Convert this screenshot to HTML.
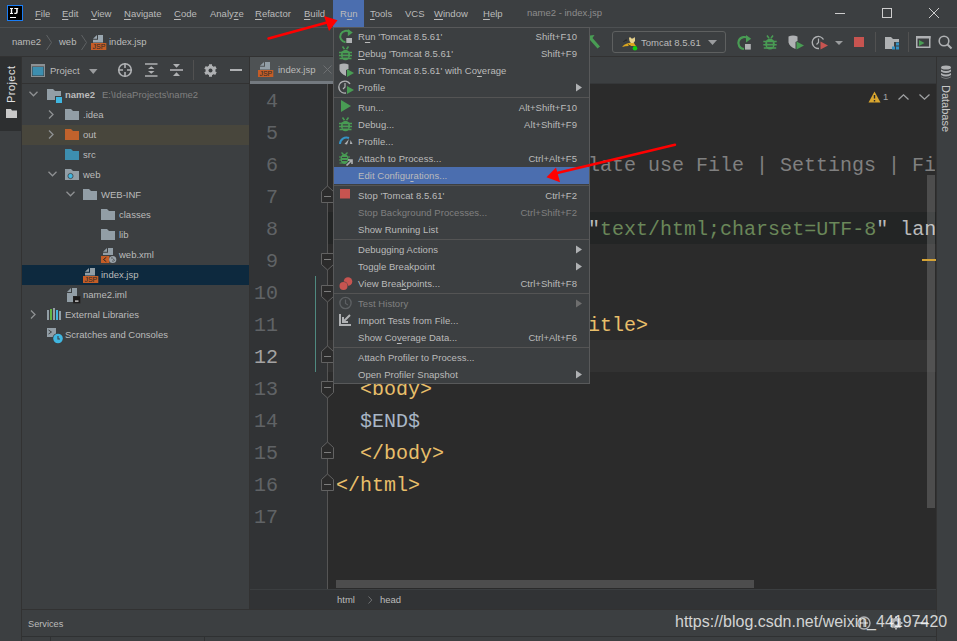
<!DOCTYPE html>
<html><head><meta charset="utf-8">
<style>
*{margin:0;padding:0;box-sizing:border-box}
html,body{width:957px;height:641px;overflow:hidden;background:#3c3f41}
body{position:relative;font-family:"Liberation Sans",sans-serif;font-size:9.5px;color:#bbbbbb}
.a{position:absolute}
.t{position:absolute;white-space:pre;line-height:12px}
.m{letter-spacing:0.05px}
u{text-underline-offset:2px;text-decoration-thickness:1px}
.mono{font-family:"Liberation Mono",monospace}
svg{position:absolute;overflow:visible}
</style></head><body>

<!-- menubar -->
<div class="a" style="left:0;top:0;width:957px;height:27px;background:#3c3f41"></div>
<div class="a" style="left:0;top:27px;width:957px;height:1px;background:#4d5052"></div>
<!-- IJ logo -->
<svg class="a" style="left:7px;top:5px" width="16" height="16"><rect x="0.5" y="0.5" width="15" height="15" fill="#000" stroke="#1a7df5" stroke-width="1"/><path d="M3 3 H6 V4 H5.2 V8 H6 V9 H3 V8 H3.8 V4 H3 Z" fill="#fff"/><path d="M7.3 3 H11.2 V4 H10.7 V7.3 Q10.7 9 8.9 9 H7.3 V7.7 H8.6 Q9.2 7.7 9.2 7.1 V4 H7.3 Z" fill="#fff"/><rect x="3" y="12" width="6" height="1" fill="#fff"/></svg>
<div id="menubar">
<div class="t" style="left:35px;top:8px"><u>F</u>ile</div>
<div class="t" style="left:62px;top:8px"><u>E</u>dit</div>
<div class="t" style="left:91px;top:8px"><u>V</u>iew</div>
<div class="t" style="left:124px;top:8px"><u>N</u>avigate</div>
<div class="t" style="left:174px;top:8px"><u>C</u>ode</div>
<div class="t" style="left:210px;top:8px">Analy<u>z</u>e</div>
<div class="t" style="left:255px;top:8px"><u>R</u>efactor</div>
<div class="t" style="left:304px;top:8px"><u>B</u>uild</div>
<div class="a" style="left:333px;top:0;width:31px;height:27px;background:#4b6eaf"></div>
<div class="t" style="left:340px;top:8px">R<u>u</u>n</div>
<div class="t" style="left:370px;top:8px"><u>T</u>ools</div>
<div class="t" style="left:405px;top:8px">VCS</div>
<div class="t" style="left:434px;top:8px"><u>W</u>indow</div>
<div class="t" style="left:483px;top:8px"><u>H</u>elp</div>
<div class="t" style="left:527px;top:7px;color:#8c8c8c">name2 - index.jsp</div>
</div>

<!-- navbar -->
<div class="a" style="left:0;top:56px;width:957px;height:1px;background:#323232"></div>
<div class="t" style="left:12px;top:36px">name2</div>
<div class="t" style="left:59px;top:36px">web</div>
<div class="t" style="left:109px;top:36px">index.jsp</div>

<div class="a" style="left:835px;top:13px;width:10px;height:1px;background:#cdcdcd"></div>
<div class="a" style="left:882px;top:8px;width:10px;height:10px;border:1px solid #cdcdcd"></div>
<svg class="a" style="left:929px;top:8px" width="10" height="10"><path d="M0 0 L10 10 M10 0 L0 10" stroke="#cdcdcd" stroke-width="1"/></svg>
<svg class="a" style="left:46px;top:35px" width="7" height="15"><path d="M0.5 0 L5.5 7.5 L0.5 15" fill="none" stroke="#5e6163" stroke-width="1"/></svg>
<svg class="a" style="left:81px;top:35px" width="7" height="15"><path d="M0.5 0 L5.5 7.5 L0.5 15" fill="none" stroke="#5e6163" stroke-width="1"/></svg>
<svg class="a" style="left:91px;top:35px" width="16" height="16"><path d="M2 3.7 L6 0 V3.7 Z M7 0 H12 V7.5 H2 V4.7 H7 Z" fill="#9aa7b0"/><rect x="0" y="8" width="15.3" height="7" fill="#c55d26"/><text x="8" y="14.3" font-family="Liberation Sans" font-size="7" fill="#2b2b2b" text-anchor="middle" letter-spacing="0">JSP</text></svg>
<svg class="a" style="left:589px;top:34px" width="14" height="16"><path d="M1 1.5 L5.5 1 L3.5 4 L11 12.5 L8.5 14.5 L1 6 Z" fill="#499c54"/></svg>
<div class="a" style="left:612px;top:31px;width:114px;height:22px;border:1px solid #5e6060;border-radius:3px"></div>
<svg class="a" style="left:621px;top:36px" width="17" height="15"><path d="M1 11 Q3 8 6 7.5 L10 6.5 L13 7 Q14 9 15 10 Q11 10 8 10 Q4 10 1 11 Z" fill="#d8a520"/><path d="M2.5 6 Q4 3.5 6 4" fill="none" stroke="#1e1e1e" stroke-width="1"/><path d="M8 2 L9 1 L10.5 2.5 H12 L13.5 1 L14 2.5 V5 L12.5 7 H10 L8.5 5 Z" fill="#e6d28c"/><path d="M7 8.5 Q8 10 9.5 9.5" stroke="#1e1e1e" stroke-width="0.8" fill="none"/><circle cx="14" cy="12.3" r="2.3" fill="#10d010"/></svg>
<div class="t" style="left:641px;top:37px">Tomcat 8.5.61</div>
<svg class="a" style="left:708px;top:40px" width="9" height="5"><path d="M0 0 H9 L4.5 5 Z" fill="#9a9c9e"/></svg>
<svg class="a" style="left:737px;top:35px" width="15" height="15"><path d="M11.6 3.8 A6 6 0 1 0 7 14" fill="none" stroke="#499c54" stroke-width="2.2"/><path d="M9 0 L14.2 3.8 L9 7.6 Z" fill="#499c54"/><rect x="8" y="9" width="5.8" height="5.6" fill="#afb1b3"/></svg>
<svg class="a" style="left:763px;top:35px" width="15" height="15"><path d="M4 0.5 L6 3.2 M10 0.5 L8 3.2" stroke="#499c54" stroke-width="1.5"/><ellipse cx="7" cy="9" rx="4.8" ry="5.5" fill="#499c54"/><path d="M0.3 6.5 H13.7 M0.3 9.7 H13.7 M0.8 12.9 H13.2" stroke="#499c54" stroke-width="1.5"/><path d="M4.2 8 H9.8 M4.2 11.2 H9.8" stroke="#3c3f41" stroke-width="1.3"/></svg>
<svg class="a" style="left:788px;top:35px" width="16" height="15"><path d="M0.5 1.5 Q5 -0.5 9.5 1.5 V6 L7.5 7 V14 Q1.5 11.5 0.5 7.5 Z" fill="#afb1b3"/><path d="M8.5 6.5 L16 10.5 L8.5 14.5 Z" fill="#499c54"/></svg>
<svg class="a" style="left:812px;top:35px" width="16" height="15"><path d="M11.5 4.5 A6 6 0 1 0 7 13.5" fill="none" stroke="#afb1b3" stroke-width="1.4"/><path d="M6.5 3.5 V7.5 L4.5 9.5" fill="none" stroke="#afb1b3" stroke-width="1.2"/><path d="M8.5 6.5 L16 10.5 L8.5 14.5 Z" fill="#c75450"/></svg>
<svg class="a" style="left:835px;top:41px" width="8" height="4"><path d="M0 0 H8 L4 4 Z" fill="#9a9c9e"/></svg>
<div class="a" style="left:854px;top:37px;width:10px;height:10px;background:#c75450"></div>
<div class="a" style="left:875px;top:32px;width:1px;height:20px;background:#515151"></div>
<div class="a" style="left:908px;top:32px;width:1px;height:20px;background:#515151"></div>
<svg class="a" style="left:885px;top:37px" width="15" height="13"><path d="M0 0 H6 L8 2 H14 V5 H9 V12 H0 Z" fill="#afb1b3"/><rect x="11" y="5.5" width="3" height="3" fill="#3592c4"/><rect x="7" y="9.5" width="3" height="3" fill="#3592c4"/><rect x="11" y="9.5" width="3" height="3" fill="#3592c4"/></svg>
<svg class="a" style="left:916px;top:36px" width="15" height="12"><rect x="0.75" y="0.75" width="13" height="10.5" fill="none" stroke="#afb1b3" stroke-width="1.5"/><rect x="0" y="0" width="14.5" height="2.5" fill="#afb1b3"/><path d="M3 4 L8.5 7 L3 10 Z" fill="#499c54"/></svg>
<svg class="a" style="left:938px;top:35px" width="15" height="15"><circle cx="6" cy="6" r="4.8" fill="none" stroke="#afb1b3" stroke-width="1.6"/><path d="M9.5 9.5 L13.5 13.5" stroke="#afb1b3" stroke-width="2"/></svg>
<!-- left stripe -->
<div class="a" style="left:0;top:57px;width:21px;height:584px;background:#3c3f41"></div>
<div class="a" style="left:0;top:57px;width:21px;height:74px;background:#2d2f30"></div>
<div class="a" style="left:21px;top:57px;width:1px;height:584px;background:#323232"></div>

<!-- project panel -->
<div class="a" style="left:22px;top:83px;width:227px;height:1px;background:#323232"></div>
<div class="t" style="left:50px;top:65px">Project</div>

<!-- tree -->
<div class="a" style="left:22px;top:125px;width:227px;height:20px;background:#48463c"></div>
<div class="a" style="left:22px;top:265px;width:227px;height:20px;background:#0d293e"></div>
<div class="t" style="left:65px;top:89px;font-weight:bold">name2</div>
<div class="t" style="left:102px;top:89px;color:#808080">E:\IdeaProjects\name2</div>
<div class="t" style="left:83px;top:109px">.idea</div>
<div class="t" style="left:83px;top:129px">out</div>
<div class="t" style="left:83px;top:149px">src</div>
<div class="t" style="left:83px;top:169px">web</div>
<div class="t" style="left:101px;top:189px">WEB-INF</div>
<div class="t" style="left:119px;top:209px">classes</div>
<div class="t" style="left:119px;top:229px">lib</div>
<div class="t" style="left:119px;top:249px">web.xml</div>
<div class="t" style="left:101px;top:269px">index.jsp</div>
<div class="t" style="left:83px;top:289px">name2.iml</div>
<div class="t" style="left:65px;top:309px">External Libraries</div>
<div class="t" style="left:65px;top:329px">Scratches and Consoles</div>

<!-- separator project/editor -->
<div class="a" style="left:249px;top:57px;width:1px;height:553px;background:#323232"></div>

<!-- editor -->
<div class="a" style="left:250px;top:57px;width:686px;height:27px;background:#3c3f41"></div>
<div class="a" style="left:250px;top:57px;width:83px;height:24px;background:#4e5254"></div>
<div class="a" style="left:250px;top:81px;width:83px;height:3px;background:#747a80"></div>
<div class="a" style="left:333px;top:83px;width:603px;height:1px;background:#353739"></div>
<div class="t" style="left:278px;top:64px">index.jsp</div>
<div class="a" style="left:250px;top:84px;width:78px;height:505px;background:#313335"></div>
<div class="a" style="left:328px;top:84px;width:608px;height:505px;background:#2b2b2b"></div>
<div class="a" style="left:328px;top:340px;width:608px;height:32px;background:#323232"></div>
<div class="a" style="left:328px;top:212px;width:608px;height:32px;background:#232525"></div>

<div class="t mono" style="left:250px;width:28px;text-align:right;top:86px;line-height:32px;font-size:20px;color:#606366">4</div>
<div class="t mono" style="left:250px;width:28px;text-align:right;top:118px;line-height:32px;font-size:20px;color:#606366">5</div>
<div class="t mono" style="left:250px;width:28px;text-align:right;top:150px;line-height:32px;font-size:20px;color:#606366">6</div>
<div class="t mono" style="left:250px;width:28px;text-align:right;top:182px;line-height:32px;font-size:20px;color:#606366">7</div>
<div class="t mono" style="left:250px;width:28px;text-align:right;top:214px;line-height:32px;font-size:20px;color:#606366">8</div>
<div class="t mono" style="left:250px;width:28px;text-align:right;top:246px;line-height:32px;font-size:20px;color:#606366">9</div>
<div class="t mono" style="left:250px;width:28px;text-align:right;top:278px;line-height:32px;font-size:20px;color:#606366">10</div>
<div class="t mono" style="left:250px;width:28px;text-align:right;top:310px;line-height:32px;font-size:20px;color:#606366">11</div>
<div class="t mono" style="left:250px;width:28px;text-align:right;top:342px;line-height:32px;font-size:20px;color:#a4a3a3">12</div>
<div class="t mono" style="left:250px;width:28px;text-align:right;top:374px;line-height:32px;font-size:20px;color:#606366">13</div>
<div class="t mono" style="left:250px;width:28px;text-align:right;top:406px;line-height:32px;font-size:20px;color:#606366">14</div>
<div class="t mono" style="left:250px;width:28px;text-align:right;top:438px;line-height:32px;font-size:20px;color:#606366">15</div>
<div class="t mono" style="left:250px;width:28px;text-align:right;top:470px;line-height:32px;font-size:20px;color:#606366">16</div>
<div class="t mono" style="left:250px;width:28px;text-align:right;top:502px;line-height:32px;font-size:20px;color:#606366">17</div>
<div class="a" style="left:328px;top:84px;width:607px;height:505px;overflow:hidden"><div class="t mono" style="left:8px;top:2px;line-height:32px;font-size:20px"><span style="color:#808080">  Date: 2021/1/22</span></div><div class="t mono" style="left:8px;top:34px;line-height:32px;font-size:20px"><span style="color:#808080">  Time: 14:46</span></div><div class="t mono" style="left:8px;top:66px;line-height:32px;font-size:20px"><span style="color:#808080">  To change this template use File | Settings | File Templates.</span></div><div class="t mono" style="left:8px;top:98px;line-height:32px;font-size:20px"><span style="color:#808080">--%&gt;</span></div><div class="t mono" style="left:8px;top:130px;line-height:32px;font-size:20px"><span style="color:#e8bf6a">&lt;%@</span><span style="color:#a9b7c6"> </span><span style="color:#e8bf6a">page </span><span style="color:#bababa">contentType=</span><span style="color:#bababa">"</span><span style="color:#6a8759">text/html;charset=UTF-8</span><span style="color:#bababa">"</span><span style="color:#bababa"> language=</span><span style="color:#bababa">"</span><span style="color:#6a8759">java</span><span style="color:#bababa">"</span><span style="color:#e8bf6a"> %&gt;</span></div><div class="t mono" style="left:8px;top:162px;line-height:32px;font-size:20px"><span style="color:#e8bf6a">&lt;html&gt;</span></div><div class="t mono" style="left:8px;top:194px;line-height:32px;font-size:20px"><span style="color:#e8bf6a">  &lt;head&gt;</span></div><div class="t mono" style="left:8px;top:226px;line-height:32px;font-size:20px"><span style="color:#e8bf6a">    &lt;title&gt;</span><span style="color:#a9b7c6">$Title$</span><span style="color:#e8bf6a">&lt;/title&gt;</span></div><div class="t mono" style="left:8px;top:258px;line-height:32px;font-size:20px"><span style="color:#e8bf6a">  &lt;/head&gt;</span></div><div class="t mono" style="left:8px;top:290px;line-height:32px;font-size:20px"><span style="color:#e8bf6a">  &lt;body&gt;</span></div><div class="t mono" style="left:8px;top:322px;line-height:32px;font-size:20px"><span style="color:#a9b7c6">  $END$</span></div><div class="t mono" style="left:8px;top:354px;line-height:32px;font-size:20px"><span style="color:#e8bf6a">  &lt;/body&gt;</span></div><div class="t mono" style="left:8px;top:386px;line-height:32px;font-size:20px"><span style="color:#e8bf6a">&lt;/html&gt;</span></div></div>
<div class="a" style="left:927px;top:175px;width:8px;height:333px;background:rgba(255,255,255,0.16)"></div>
<div class="a" style="left:327px;top:84px;width:1px;height:505px;background:#555555"></div>
<svg class="a" style="left:321px;top:185px" width="13" height="19"><path d="M0.5 17.5 H12.5 V6.5 L6.5 1 L0.5 6.5 Z" fill="#2b2b2b" stroke="#626262" stroke-width="1"/><path d="M3 11.5 H10" stroke="#7c7c7c" stroke-width="1"/></svg>
<svg class="a" style="left:321px;top:253px" width="13" height="19"><path d="M0.5 0.5 H12.5 V11.5 L6.5 17 L0.5 11.5 Z" fill="#2b2b2b" stroke="#626262" stroke-width="1"/><path d="M3 6.5 H10" stroke="#7c7c7c" stroke-width="1"/></svg>
<svg class="a" style="left:321px;top:285px" width="13" height="19"><path d="M0.5 0.5 H12.5 V11.5 L6.5 17 L0.5 11.5 Z" fill="#2b2b2b" stroke="#626262" stroke-width="1"/><path d="M3 6.5 H10" stroke="#7c7c7c" stroke-width="1"/></svg>
<svg class="a" style="left:321px;top:345px" width="13" height="19"><path d="M0.5 17.5 H12.5 V6.5 L6.5 1 L0.5 6.5 Z" fill="#2b2b2b" stroke="#626262" stroke-width="1"/><path d="M3 11.5 H10" stroke="#7c7c7c" stroke-width="1"/></svg>
<svg class="a" style="left:321px;top:381px" width="13" height="19"><path d="M0.5 0.5 H12.5 V11.5 L6.5 17 L0.5 11.5 Z" fill="#2b2b2b" stroke="#626262" stroke-width="1"/><path d="M3 6.5 H10" stroke="#7c7c7c" stroke-width="1"/></svg>
<svg class="a" style="left:321px;top:441px" width="13" height="19"><path d="M0.5 17.5 H12.5 V6.5 L6.5 1 L0.5 6.5 Z" fill="#2b2b2b" stroke="#626262" stroke-width="1"/><path d="M3 11.5 H10" stroke="#7c7c7c" stroke-width="1"/></svg>
<svg class="a" style="left:321px;top:473px" width="13" height="19"><path d="M0.5 17.5 H12.5 V6.5 L6.5 1 L0.5 6.5 Z" fill="#2b2b2b" stroke="#626262" stroke-width="1"/><path d="M3 11.5 H10" stroke="#7c7c7c" stroke-width="1"/></svg>
<div class="a" style="left:315px;top:276px;width:1px;height:96px;background:#4f8a80"></div>
<!-- breadcrumbs bottom -->
<div class="a" style="left:250px;top:589px;width:686px;height:20px;background:#313335"></div>
<div class="a" style="left:250px;top:589px;width:686px;height:1px;background:#3b3e40"></div>
<div class="t" style="left:337px;top:594px">html</div>
<div class="t" style="left:380px;top:594px">head</div>

<!-- services -->
<div class="a" style="left:22px;top:609px;width:914px;height:1px;background:#323232"></div>
<div class="t" style="left:28px;top:618px;font-size:9.2px">Services</div>
<div class="a" style="left:22px;top:636px;width:914px;height:1px;background:#2f3132"></div>
<div class="a" style="left:50px;top:637px;width:1px;height:4px;background:#2f3132"></div>
<div class="a" style="left:204px;top:637px;width:1px;height:4px;background:#2f3132"></div>

<!-- right stripe -->
<div class="a" style="left:936px;top:57px;width:1px;height:584px;background:#323232"></div>

<svg class="a" style="left:29px;top:91px" width="10" height="6"><path d="M0.5 0.8 L4.5 4.8 L8.5 0.8" fill="none" stroke="#8f9193" stroke-width="1.3"/></svg>
<svg class="a" style="left:47px;top:89px" width="16" height="15"><path d="M0 0 H6 L8 2 H14 V11 H0 Z" fill="#929ea6"/><rect x="8" y="7" width="7" height="7" fill="#3c3f41"/><rect x="9" y="8" width="6" height="6" fill="#40b6e0"/></svg>
<svg class="a" style="left:48px;top:110px" width="7" height="9"><path d="M1 0.5 L5 4.5 L1 8.5" fill="none" stroke="#8f9193" stroke-width="1.3"/></svg>
<svg class="a" style="left:65px;top:109px" width="16" height="14"><path d="M0 0 H6 L8 2 H14 V11 H0 Z" fill="#929ea6"/></svg>
<svg class="a" style="left:48px;top:130px" width="7" height="9"><path d="M1 0.5 L5 4.5 L1 8.5" fill="none" stroke="#8f9193" stroke-width="1.3"/></svg>
<svg class="a" style="left:65px;top:129px" width="16" height="14"><path d="M0 0 H6 L8 2 H14 V11 H0 Z" fill="#c1622c"/></svg>
<svg class="a" style="left:65px;top:149px" width="16" height="14"><path d="M0 0 H6 L8 2 H14 V11 H0 Z" fill="#3d8eaf"/></svg>
<svg class="a" style="left:48px;top:171px" width="10" height="6"><path d="M0.5 0.8 L4.5 4.8 L8.5 0.8" fill="none" stroke="#8f9193" stroke-width="1.3"/></svg>
<svg class="a" style="left:65px;top:169px" width="16" height="14"><path d="M0 0 H6 L8 2 H14 V11 H0 Z" fill="#929ea6"/><circle cx="5.5" cy="7" r="2.6" fill="#40b6e0"/><circle cx="5.5" cy="7" r="2.6" fill="none" stroke="#3c3f41" stroke-width="0.8"/></svg>
<svg class="a" style="left:66px;top:191px" width="10" height="6"><path d="M0.5 0.8 L4.5 4.8 L8.5 0.8" fill="none" stroke="#8f9193" stroke-width="1.3"/></svg>
<svg class="a" style="left:83px;top:189px" width="16" height="14"><path d="M0 0 H6 L8 2 H14 V11 H0 Z" fill="#929ea6"/></svg>
<svg class="a" style="left:101px;top:209px" width="16" height="14"><path d="M0 0 H6 L8 2 H14 V11 H0 Z" fill="#929ea6"/></svg>
<svg class="a" style="left:101px;top:229px" width="16" height="14"><path d="M0 0 H6 L8 2 H14 V11 H0 Z" fill="#929ea6"/></svg>
<svg class="a" style="left:101px;top:248px" width="17" height="16"><path d="M2 3.7 L6 0 V3.7 Z M7 0 H12 V7 H2 V4.7 H7 Z" fill="#929ea6"/><rect x="0" y="8" width="8.3" height="7" fill="#c55d26"/><path d="M5.3 9.3 L2.5 11.5 L5.3 13.7" fill="none" stroke="#2b2b2b" stroke-width="1"/><circle cx="11.7" cy="11.5" r="3.6" fill="#9aa3a9"/><path d="M10 10 Q11.5 9.5 12.5 11 L13.5 12.5 Q12.5 13.5 11 13" fill="none" stroke="#4a4d4f" stroke-width="0.9"/></svg>
<svg class="a" style="left:83px;top:268px" width="16" height="16"><path d="M2 3.7 L6 0 V3.7 Z M7 0 H12 V7.5 H2 V4.7 H7 Z" fill="#929ea6"/><rect x="0" y="8" width="15.3" height="7" fill="#c55d26"/><text x="7.8" y="14.3" font-family="Liberation Sans" font-size="7" fill="#2b2b2b" text-anchor="middle" letter-spacing="0">JSP</text></svg>
<svg class="a" style="left:67px;top:288px" width="14" height="16"><path d="M0 4 L4 0 V4 Z M5 0 H10 V14 H0 V5 H5 Z" fill="#929ea6"/><rect x="6" y="8" width="7.5" height="7.5" fill="#2b2b2b"/><rect x="6.5" y="8.5" width="6.5" height="6.2" fill="#1c1a1a"/><rect x="8" y="12.5" width="3.5" height="1.2" fill="#e8e8e8"/></svg>
<svg class="a" style="left:30px;top:310px" width="7" height="9"><path d="M1 0.5 L5 4.5 L1 8.5" fill="none" stroke="#8f9193" stroke-width="1.3"/></svg>
<svg class="a" style="left:47px;top:308px" width="15" height="13"><rect x="0" y="2" width="2" height="10" fill="#929ea6"/><rect x="3" y="1" width="2" height="11" fill="#62b543"/><rect x="6" y="0" width="2" height="12" fill="#929ea6"/><rect x="9" y="2" width="2" height="10" fill="#40b6e0"/><rect x="12" y="3" width="2" height="9" fill="#929ea6"/></svg>
<svg class="a" style="left:46px;top:327px" width="17" height="17"><path d="M1 1 H10 V10 H1 Z" fill="#929ea6"/><path d="M2.5 3 L5.5 5 L2.5 7" fill="none" stroke="#3c3f41" stroke-width="1"/><circle cx="12" cy="11.5" r="5.5" fill="#3c3f41"/><circle cx="12" cy="11.5" r="4.8" fill="#40b6e0"/><path d="M12 9 V12 H14" fill="none" stroke="#3c3f41" stroke-width="1.1"/></svg>
<svg class="a" style="left:31px;top:64px" width="15" height="13"><rect x="0.5" y="0.5" width="13" height="12" fill="none" stroke="#8c9194" stroke-width="1"/><rect x="0" y="0" width="14" height="2.5" fill="#8c9194"/><rect x="1.5" y="3" width="11" height="8.5" fill="#3d8eaf"/></svg>
<svg class="a" style="left:89px;top:69px" width="9" height="5"><path d="M0 0 H8.5 L4.25 5 Z" fill="#9a9c9e"/></svg>
<svg class="a" style="left:117px;top:62px" width="16" height="16"><circle cx="8" cy="8" r="6.3" fill="none" stroke="#afb1b3" stroke-width="1.6"/><path d="M8 1 V6 M8 10 V15 M1 8 H6 M10 8 H15" stroke="#afb1b3" stroke-width="1.6"/></svg>
<svg class="a" style="left:145px;top:63px" width="13" height="14"><path d="M0 1 H12.5 M0 13 H12.5" stroke="#afb1b3" stroke-width="1.6"/><path d="M3 6 L6.25 3.3 L9.5 6 Z M3 8 L6.25 10.7 L9.5 8 Z" fill="#afb1b3"/></svg>
<svg class="a" style="left:170px;top:63px" width="14" height="14"><path d="M0 7 H13" stroke="#afb1b3" stroke-width="1.6"/><path d="M3 1 L6.5 4.8 L10 1 Z M3 13 L6.5 9.2 L10 13 Z" fill="#afb1b3"/></svg>
<div class="a" style="left:193px;top:60px;width:1px;height:20px;background:#515151"></div>
<svg class="a" style="left:202.5px;top:62.5px" width="15" height="15"><circle cx="7.5" cy="7.5" r="4.9" fill="#afb1b3"/><path d="M7.50 13.80 L7.50 1.20 M2.04 10.65 L12.96 4.35 M2.04 4.35 L12.96 10.65" stroke="#afb1b3" stroke-width="3"/><circle cx="7.5" cy="7.5" r="2" fill="#3c3f41"/></svg>
<div class="a" style="left:230px;top:69px;width:12px;height:2px;background:#afb1b3"></div>
<div class="t" style="left:5px;top:59px;width:60px;height:12px;transform-origin:0 0;transform:translate(0,44px) rotate(-90deg);color:#e0e0e0;font-size:11px;letter-spacing:0.45px">Project</div>
<svg class="a" style="left:6px;top:109px" width="12" height="10"><path d="M0 0 H5 L6 1.5 H11 V9 H0 Z" fill="#c9c9c9"/></svg>
<svg class="a" style="left:940px;top:65px" width="12" height="14"><ellipse cx="6" cy="2.5" rx="5" ry="2" fill="#afb1b3"/><path d="M1 4.5 Q6 7.5 11 4.5 V6.5 Q6 9.5 1 6.5 Z M1 8 Q6 11 11 8 V10 Q6 13 1 10 Z M1 11.5 Q6 14.5 11 11.5 V12 Q6 15 1 12 Z" fill="#afb1b3"/></svg>
<div class="t" style="left:952px;top:85px;width:50px;transform-origin:0 0;transform:rotate(90deg);color:#c8c8c8;font-size:11px">Database</div>
<svg class="a" style="left:258px;top:62px" width="16" height="16"><path d="M2 3.7 L6 0 V3.7 Z M7 0 H12 V7.5 H2 V4.7 H7 Z" fill="#929ea6"/><rect x="0" y="8" width="15.3" height="7" fill="#c55d26"/><text x="7.8" y="14.3" font-family="Liberation Sans" font-size="7" fill="#2b2b2b" text-anchor="middle" letter-spacing="0">JSP</text></svg>
<svg class="a" style="left:323px;top:65px" width="9" height="9"><path d="M0.5 0.5 L8.5 8.5 M8.5 0.5 L0.5 8.5" stroke="#6e7072" stroke-width="1"/></svg>
<svg class="a" style="left:868px;top:91px" width="13" height="12"><path d="M6.5 0.5 L12.5 11.5 H0.5 Z" fill="#d9a62e"/><path d="M6.5 4 V7.5 M6.5 9 V10.5" stroke="#2b2b2b" stroke-width="1.4"/></svg>
<div class="t" style="left:883px;top:91px;color:#a0a4a8">1</div>
<svg class="a" style="left:898px;top:94px" width="11" height="6"><path d="M0.5 5.5 L5.5 0.8 L10.5 5.5" fill="none" stroke="#a0a2a4" stroke-width="1.3"/></svg>
<svg class="a" style="left:919px;top:94px" width="11" height="6"><path d="M0.5 0.5 L5.5 5.2 L10.5 0.5" fill="none" stroke="#a0a2a4" stroke-width="1.3"/></svg>
<div class="a" style="left:922px;top:259px;width:14px;height:1.5px;background:#d6a436"></div>
<div class="a" style="left:336px;top:580px;width:418px;height:8px;background:#4d4d4d"></div>
<svg class="a" style="left:368px;top:596px" width="5" height="8"><path d="M0.5 0.5 L3.8 4 L0.5 7.5" fill="none" stroke="#6e7072" stroke-width="1"/></svg>
<div class="a" style="left:333px;top:27px;width:257px;height:357px;background:#3c3f41;border:1px solid #58595a"></div>
<div class="t m" style="left:358px;top:31px;color:#bbbbbb">R<u>u</u>n 'Tomcat 8.5.61'</div>
<div class="t m" style="right:380px;top:31px;color:#bbbbbb">Shift+F10</div>
<svg class="a" style="left:339px;top:29px" width="14" height="15"><path d="M11.1 3.6 A5.7 5.7 0 1 0 6.5 13.2" fill="none" stroke="#499c54" stroke-width="2"/><path d="M8.8 0 L13.8 3.6 L8.8 7.2 Z" fill="#499c54"/><rect x="7.3" y="9" width="5.7" height="5" fill="#afb1b3"/></svg>
<div class="t m" style="left:358px;top:48px;color:#bbbbbb"><u>D</u>ebug 'Tomcat 8.5.61'</div>
<div class="t m" style="right:380px;top:48px;color:#bbbbbb">Shift+F9</div>
<svg class="a" style="left:339px;top:46px" width="14" height="15"><path d="M3.5 0.5 L5.5 3.2 M9.5 0.5 L7.5 3.2" stroke="#499c54" stroke-width="1.5"/><ellipse cx="6.5" cy="9" rx="4.6" ry="5.3" fill="#499c54"/><path d="M0 6.5 H13 M0 9.5 H13 M0.5 12.5 H12.5" stroke="#499c54" stroke-width="1.5"/><path d="M3.8 7.8 H9.2 M3.8 10.8 H9.2" stroke="#3c3f41" stroke-width="1.3"/></svg>
<div class="t m" style="left:358px;top:65px;color:#bbbbbb">Run 'Tomcat 8.5.61' with Co<u>v</u>erage</div>
<svg class="a" style="left:339px;top:63px" width="14" height="15"><path d="M0.5 1.5 Q5 -0.5 9.5 1.5 V6 L7 7 V13 Q1.5 10.5 0.5 7 Z" fill="#afb1b3"/><path d="M8 6 L15 10 L8 14 Z" fill="#499c54"/></svg>
<div class="t m" style="left:358px;top:82px;color:#bbbbbb">Profile</div>
<svg class="a" style="left:576px;top:83px" width="7" height="9"><path d="M0 0.5 L6 4.5 L0 8.5 Z" fill="#afb1b3"/></svg>
<svg class="a" style="left:339px;top:80px" width="14" height="15"><path d="M11 4 A6 6 0 1 0 7 13" fill="none" stroke="#afb1b3" stroke-width="1.4"/><path d="M6 3 V7 L4 9" fill="none" stroke="#afb1b3" stroke-width="1.2"/><path d="M8 6 L15 10 L8 14 Z" fill="#499c54"/></svg>
<div class="a" style="left:334px;top:97px;width:255px;height:1px;background:#545454"></div>
<div class="t m" style="left:358px;top:102px;color:#bbbbbb">Run...</div>
<div class="t m" style="right:380px;top:102px;color:#bbbbbb">Alt+Shift+F10</div>
<svg class="a" style="left:339px;top:100px" width="14" height="15"><path d="M2 0 L12 6 L2 12 Z" fill="#499c54"/></svg>
<div class="t m" style="left:358px;top:119px;color:#bbbbbb">Debug...</div>
<div class="t m" style="right:380px;top:119px;color:#bbbbbb">Alt+Shift+F9</div>
<svg class="a" style="left:339px;top:117px" width="14" height="15"><path d="M3.5 0.5 L5.5 3.2 M9.5 0.5 L7.5 3.2" stroke="#499c54" stroke-width="1.5"/><ellipse cx="6.5" cy="9" rx="4.6" ry="5.3" fill="#499c54"/><path d="M0 6.5 H13 M0 9.5 H13 M0.5 12.5 H12.5" stroke="#499c54" stroke-width="1.5"/><path d="M3.8 7.8 H9.2 M3.8 10.8 H9.2" stroke="#3c3f41" stroke-width="1.3"/></svg>
<div class="t m" style="left:358px;top:136px;color:#bbbbbb">Profile...</div>
<svg class="a" style="left:339px;top:134px" width="14" height="15"><path d="M1 10 A6.5 6.5 0 0 1 10 4" fill="none" stroke="#3592c4" stroke-width="2"/><path d="M5.5 10 L10 5 L8 10.5 Z" fill="#afb1b3"/><path d="M11.5 6 L13.5 10 H11 Z" fill="#afb1b3"/></svg>
<div class="t m" style="left:358px;top:153px;color:#bbbbbb">Attach to Process...</div>
<div class="t m" style="right:380px;top:153px;color:#bbbbbb">Ctrl+Alt+F5</div>
<svg class="a" style="left:339px;top:151px" width="14" height="15"><ellipse cx="5.5" cy="8" rx="4" ry="5" fill="#499c54"/><path d="M2.5 1.5 L4.5 3.5 M8.5 1.5 L6.5 3.5" stroke="#499c54" stroke-width="1.4"/><path d="M0 6 H11 M0 9 H11 M0.5 12 H10" stroke="#499c54" stroke-width="1.2"/><path d="M3 6.5 H8 M3 9.5 H8" stroke="#3c3f41" stroke-width="1.2"/><path d="M7 15 L13 9" stroke="#3c3f41" stroke-width="3"/><path d="M7.5 14.5 L12.5 9.5 M9 9 H13 V13" fill="none" stroke="#afb1b3" stroke-width="1.6"/></svg>
<div class="a" style="left:334px;top:167px;width:255px;height:17px;background:#4b6eaf"></div>
<div class="t m" style="left:358px;top:170px;color:#bbbbbb">Edit Configu<u>r</u>ations...</div>
<div class="a" style="left:334px;top:185px;width:255px;height:1px;background:#545454"></div>
<div class="t m" style="left:358px;top:190px;color:#bbbbbb">Stop 'Tomcat 8.5.61'</div>
<div class="t m" style="right:380px;top:190px;color:#bbbbbb">Ctrl+F2</div>
<svg class="a" style="left:339px;top:188px" width="14" height="15"><rect x="1" y="1" width="10" height="9.5" fill="#c75450"/></svg>
<div class="t m" style="left:358px;top:207px;color:#808080">Stop Background Processes...</div>
<div class="t m" style="right:380px;top:207px;color:#808080">Ctrl+Shift+F2</div>
<div class="t m" style="left:358px;top:224px;color:#bbbbbb">Show Running List</div>
<div class="a" style="left:334px;top:239px;width:255px;height:1px;background:#545454"></div>
<div class="t m" style="left:358px;top:244px;color:#bbbbbb">Debugging Actions</div>
<svg class="a" style="left:576px;top:245px" width="7" height="9"><path d="M0 0.5 L6 4.5 L0 8.5 Z" fill="#afb1b3"/></svg>
<div class="t m" style="left:358px;top:261px;color:#bbbbbb">Toggle Breakpoint</div>
<svg class="a" style="left:576px;top:262px" width="7" height="9"><path d="M0 0.5 L6 4.5 L0 8.5 Z" fill="#afb1b3"/></svg>
<div class="t m" style="left:358px;top:278px;color:#bbbbbb">View Brea<u>k</u>points...</div>
<div class="t m" style="right:380px;top:278px;color:#bbbbbb">Ctrl+Shift+F8</div>
<svg class="a" style="left:339px;top:276px" width="14" height="15"><circle cx="9" cy="5.5" r="4.3" fill="#c75450"/><circle cx="4.5" cy="10" r="4.5" fill="#3c3f41"/><circle cx="4.5" cy="10" r="4" fill="#c75450"/></svg>
<div class="a" style="left:334px;top:293px;width:255px;height:1px;background:#545454"></div>
<div class="t m" style="left:358px;top:298px;color:#808080">Test History</div>
<svg class="a" style="left:576px;top:299px" width="7" height="9"><path d="M0 0.5 L6 4.5 L0 8.5 Z" fill="#6e6e6e"/></svg>
<svg class="a" style="left:339px;top:296px" width="14" height="15"><circle cx="6.5" cy="7" r="5.6" fill="none" stroke="#5d6063" stroke-width="1.4"/><path d="M6.5 3.5 V7.5 L9 9" fill="none" stroke="#5d6063" stroke-width="1.2"/></svg>
<div class="t m" style="left:358px;top:315px;color:#bbbbbb">Import Tests from File...</div>
<svg class="a" style="left:339px;top:313px" width="14" height="15"><path d="M1 1 V12 H12" fill="none" stroke="#afb1b3" stroke-width="2"/><path d="M11 2 L4 9 M4 4 V9 H9" fill="none" stroke="#afb1b3" stroke-width="2"/></svg>
<div class="t m" style="left:358px;top:332px;color:#bbbbbb">Show Co<u>v</u>erage Data...</div>
<div class="t m" style="right:380px;top:332px;color:#bbbbbb">Ctrl+Alt+F6</div>
<div class="a" style="left:334px;top:347px;width:255px;height:1px;background:#545454"></div>
<div class="t m" style="left:358px;top:352px;color:#bbbbbb">Attach Profiler to Process...</div>
<div class="t m" style="left:358px;top:369px;color:#bbbbbb">Open Profiler Snapshot</div>
<svg class="a" style="left:576px;top:370px" width="7" height="9"><path d="M0 0.5 L6 4.5 L0 8.5 Z" fill="#afb1b3"/></svg>
<!-- services header icons -->
<svg class="a" style="left:856px;top:615px" width="80" height="16"><circle cx="8" cy="8" r="6" fill="none" stroke="#afb1b3" stroke-width="1.4"/><path d="M8 4 V12 M4 8 H12" stroke="#afb1b3" stroke-width="1.4"/><path d="M29 2 V14" stroke="#515151"/><circle cx="40" cy="8" r="4" fill="none" stroke="#afb1b3" stroke-width="2.5"/><path d="M40 1.5 V14.5 M33.5 8 H46.5 M35.5 3.5 L44.5 12.5 M44.5 3.5 L35.5 12.5" stroke="#afb1b3" stroke-width="2"/><circle cx="40" cy="8" r="1.8" fill="#3c3f41"/><path d="M60 8 H72" stroke="#afb1b3" stroke-width="2"/></svg>
<!-- arrows -->
<svg class="a" style="left:0;top:0" width="957" height="641">
<path d="M268.5 38.5 L327 22.5" stroke="#ff0000" stroke-width="2.5" stroke-linecap="round"/>
<path d="M337.5 20.3 L324 16 L329 31 Z" fill="#ff0000"/>
<path d="M675 144.8 L553 174" stroke="#ff0000" stroke-width="2.5" stroke-linecap="round"/>
<path d="M546.5 177.3 L556 167.5 L560 182.2 Z" fill="#ff0000"/>
</svg>
<!-- watermark -->
<div class="t" style="left:675px;top:612px;font-size:16px;line-height:20px;color:rgba(255,255,255,0.78)">https://blog.csdn.net/weixin_44197420</div>
</body></html>
